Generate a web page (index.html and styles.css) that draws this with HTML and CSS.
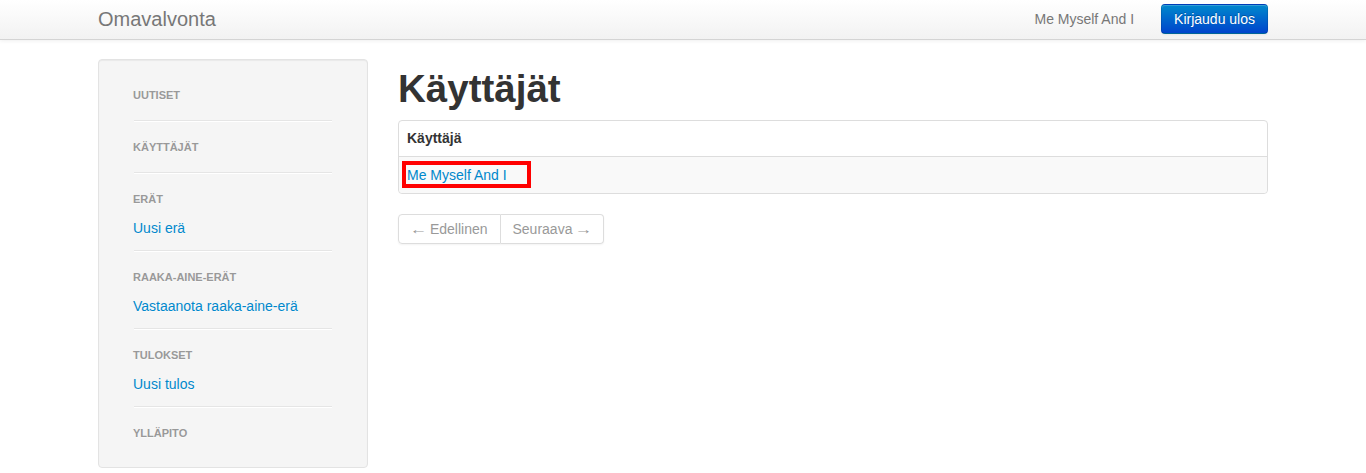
FILE: index.html
```html
<!DOCTYPE html>
<html lang="fi">
<head>
<meta charset="utf-8">
<title>Omavalvonta</title>
<link rel="stylesheet" href="styles.css">
</head>
<body>
<header class="navbar">
  <div class="container navbar-inner">
    <a class="brand" href="#">Omavalvonta</a>
    <div class="nav-right">
      <span class="navbar-text">Me Myself And I</span>
      <a class="btn btn-primary" href="#">Kirjaudu ulos</a>
    </div>
  </div>
</header>
<div class="container main-row">
  <aside class="well sidebar">
    <ul class="nav-list">
      <li class="nav-header">Uutiset</li>
      <li class="divider"></li>
      <li class="nav-header">Käyttäjät</li>
      <li class="divider"></li>
      <li class="nav-header">Erät</li>
      <li class="nav-link"><a href="#">Uusi erä</a></li>
      <li class="divider"></li>
      <li class="nav-header">Raaka-aine-erät</li>
      <li class="nav-link"><a href="#">Vastaanota raaka-aine-erä</a></li>
      <li class="divider"></li>
      <li class="nav-header">Tulokset</li>
      <li class="nav-link"><a href="#">Uusi tulos</a></li>
      <li class="divider"></li>
      <li class="nav-header">Ylläpito</li>
    </ul>
  </aside>
  <main class="content">
    <h1 class="page-title">Käyttäjät</h1>
    <table class="table">
      <thead>
        <tr><th>Käyttäjä</th></tr>
      </thead>
      <tbody>
        <tr><td class="cell-marked"><a href="#">Me Myself And I</a><span class="highlight-box"></span></td></tr>
      </tbody>
    </table>
    <ul class="pager">
      <li><span class="pager-item"><span class="arrow">←</span> Edellinen</span></li>
      <li><span class="pager-item">Seuraava <span class="arrow">→</span></span></li>
    </ul>
  </main>
</div>
</body>
</html>
```

FILE: styles.css
```css
* { box-sizing: border-box; }

html, body {
  margin: 0;
  padding: 0;
  background: #fff;
}

body {
  font-family: "Liberation Sans", Arial, sans-serif;
  font-size: 14px;
  line-height: 20px;
  color: #333;
}

a { color: #0088cc; text-decoration: none; }

.container {
  width: 1170px;
  margin: 0 auto;
}

/* Navbar */
.navbar {
  height: 40px;
  background: linear-gradient(to bottom, #ffffff, #f2f2f2);
  border-bottom: 1px solid #d4d4d4;
  box-shadow: 0 1px 4px rgba(0, 0, 0, 0.065);
}

.navbar-inner {
  display: flex;
  justify-content: space-between;
  align-items: flex-start;
  height: 39px;
}

.brand {
  display: block;
  font-size: 20px;
  line-height: 20px;
  padding: 9px 0 10px;
  color: #777;
}

.nav-right {
  display: flex;
  align-items: flex-start;
  gap: 27px;
}

.navbar-text {
  line-height: 39px;
  color: #777;
}

.btn {
  display: inline-block;
  margin-top: 4px;
  padding: 4px 12px;
  font-size: 14px;
  line-height: 20px;
  border-radius: 4px;
  border: 1px solid;
}

.btn-primary {
  color: #fff;
  text-shadow: 0 -1px 0 rgba(0, 0, 0, 0.25);
  background: linear-gradient(to bottom, #0088cc, #0044cc);
  border-color: rgba(0, 0, 0, 0.1) rgba(0, 0, 0, 0.1) rgba(0, 0, 0, 0.25);
  box-shadow: inset 0 1px 0 rgba(255, 255, 255, 0.2), 0 1px 2px rgba(0, 0, 0, 0.05);
}

/* Layout */
.main-row {
  display: flex;
  align-items: flex-start;
  gap: 30px;
  margin-top: 19px;
}

.sidebar {
  width: 270px;
  flex: none;
}

.content {
  width: 870px;
  flex: none;
}

/* Well */
.well {
  background: #f5f5f5;
  border: 1px solid #e3e3e3;
  border-radius: 4px;
  box-shadow: inset 0 1px 1px rgba(0, 0, 0, 0.05);
  padding: 22px 34px 21px;
}

.nav-list {
  list-style: none;
  margin: 0;
  padding: 0;
}

.nav-header {
  display: block;
  padding: 3px 0;
  font-size: 11px;
  font-weight: bold;
  line-height: 20px;
  color: #999;
  text-transform: uppercase;
  text-shadow: 0 1px 0 rgba(255, 255, 255, 0.5);
}

.nav-link {
  padding: 6px 0 0;
  line-height: 20px;
  text-shadow: 0 1px 0 rgba(255, 255, 255, 0.5);
}

.nav-link a { display: block; }

.divider {
  height: 2px;
  margin: 12px 1px;
  background: #e5e5e5;
  border-bottom: 1px solid #fff;
}

/* Main */
.page-title {
  margin: 10px 0 11px;
  font-size: 38.5px;
  line-height: 40px;
  font-weight: bold;
  color: #333;
}

.table {
  width: 100%;
  border: 1px solid #ddd;
  border-radius: 4px;
  border-collapse: separate;
  border-spacing: 0;
  margin-bottom: 20px;
}

.table th,
.table td {
  line-height: 20px;
  text-align: left;
  vertical-align: top;
}

.table th {
  padding: 7px 8px 8px;
  font-weight: bold;
}

.table td {
  padding: 8px 8px 8px;
  border-top: 1px solid #ddd;
  background: #f9f9f9;
}

.table tbody tr:last-child td {
  border-radius: 0 0 4px 4px;
}

.cell-marked {
  position: relative;
}

.highlight-box {
  position: absolute;
  left: 3px;
  top: 4px;
  width: 129px;
  height: 27px;
  border: 4px solid #f00;
}

/* Pager */
.pager {
  display: inline-flex;
  list-style: none;
  margin: 0;
  padding: 0;
  border-radius: 4px;
  box-shadow: 0 1px 2px rgba(0, 0, 0, 0.05);
}

.pager-item {
  display: block;
  padding: 4px 12px;
  line-height: 20px;
  color: #999;
  background: #fff;
  border: 1px solid #ddd;
}

.arrow {
  display: inline-block;
  width: 15px;
  text-align: center;
  transform: scaleX(1.25);
}

.pager li:first-child .pager-item {
  border-radius: 4px 0 0 4px;
}

.pager li:last-child .pager-item {
  border-left: 0;
  border-radius: 0 4px 4px 0;
}
```
